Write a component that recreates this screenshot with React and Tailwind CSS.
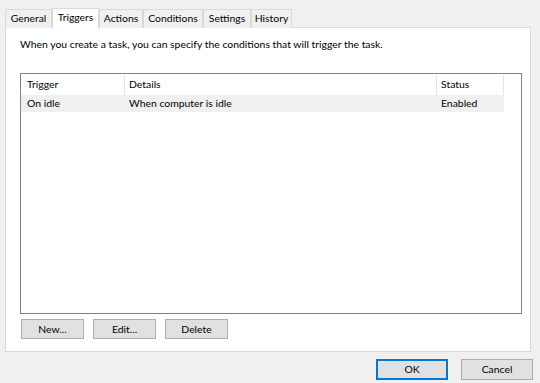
import React from 'react';

const tabs = [
    { label: 'General', w: 'w-[47px]' },
    { label: 'Triggers', w: 'w-[47px]', active: true },
    { label: 'Actions', w: 'w-[44px]' },
    { label: 'Conditions', w: 'w-[60px]' },
    { label: 'Settings', w: 'w-[48px]' },
    { label: 'History', w: 'w-[41px]' },
];

const SmallButton = ({ children }) => (
    <button className="w-[63px] h-[20px] bg-[#e1e1e1] border border-[#adadad] leading-none text-black flex items-center justify-center">
        {children}
    </button>
);

const App = () => {
    return (
        <div
            className="w-[540px] h-[383px] bg-[#f0f0f0] text-black overflow-hidden text-[10.4px]"
            style={{ fontFamily: 'Lato, "Noto Sans", sans-serif' }}
        >
            <div className="flex items-end pl-[5px] pt-[7px] h-[28px]">
                {tabs.map(t => (
                    <div
                        key={t.label}
                        className={
                            t.active
                                ? `${t.w} h-[21px] bg-white border border-[#d9d9d9] border-b-0 -mb-px relative z-10 flex items-center justify-center pb-[2px]`
                                : `${t.w} h-[19px] bg-[#f0f0f0] border border-[#d9d9d9] border-b-0 flex items-center justify-center`
                        }
                    >
                        {t.label}
                    </div>
                ))}
            </div>

            <div className="ml-[5px] w-[526px] h-[325px] -mt-px bg-white border border-[#d9d9d9] pl-[14px] pr-[9px]">
                <p className="mt-[8px] leading-[16px]">
                    When you create a task, you can specify the conditions that will trigger the task.
                </p>

                <div className="mt-[21px] w-[502px] h-[241px] border border-[#828282] bg-white pt-[1px]">
                    <div className="flex h-[20px] w-[483px]">
                        <div className="w-[104px] pl-[6px] flex items-center border-r border-[#e5e5e5]">Trigger</div>
                        <div className="w-[312px] pl-[4px] flex items-center border-r border-[#e5e5e5]">Details</div>
                        <div className="flex-1 pl-[4px] flex items-center border-r border-[#e5e5e5]">Status</div>
                    </div>
                    <div className="flex h-[17px] w-[483px] bg-[#f0f0f0]">
                        <div className="w-[104px] pl-[6px] flex items-center">On idle</div>
                        <div className="w-[312px] pl-[4px] flex items-center">When computer is idle</div>
                        <div className="flex-1 pl-[4px] flex items-center">Enabled</div>
                    </div>
                </div>

                <div className="flex gap-[9px] mt-[5px] pl-[1px]">
                    <SmallButton>New...</SmallButton>
                    <SmallButton>Edit...</SmallButton>
                    <SmallButton>Delete</SmallButton>
                </div>
            </div>

            <div className="flex justify-end gap-[13px] pr-[7px] mt-[7px]">
                <button className="w-[72px] h-[21px] bg-[#e1e1e1] border-2 border-[#0078d7] leading-none flex items-center justify-center">
                    OK
                </button>
                <button className="w-[72px] h-[21px] bg-[#e1e1e1] border border-[#adadad] leading-none flex items-center justify-center">
                    Cancel
                </button>
            </div>
        </div>
    );
};

export default App;
